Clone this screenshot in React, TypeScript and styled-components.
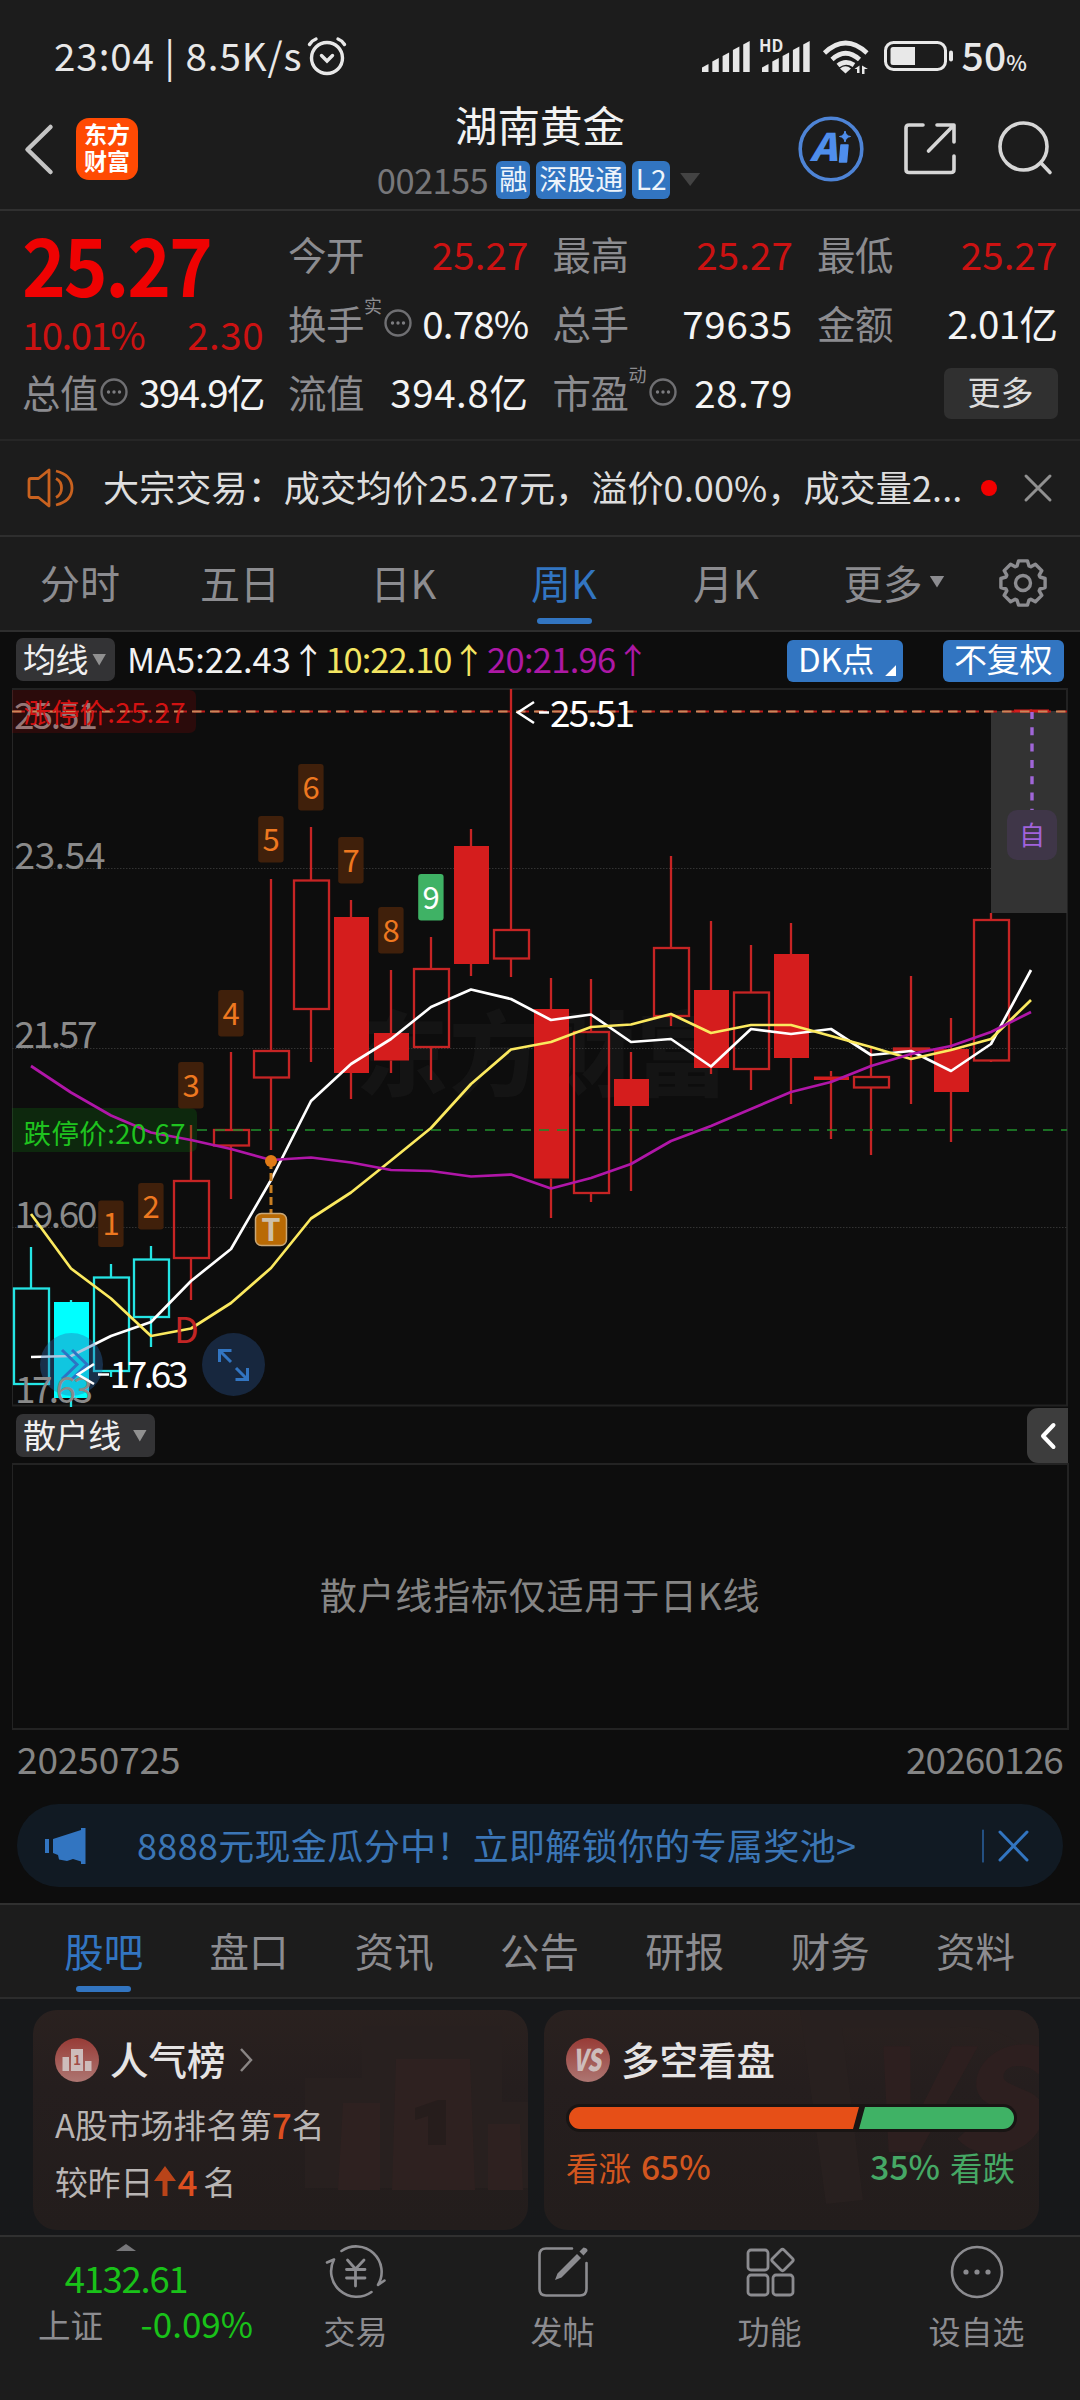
import React from "react";
import styled, { createGlobalStyle, css } from "styled-components";

const GlobalStyle = createGlobalStyle`
  * { box-sizing: border-box; }
  html, body { margin: 0; padding: 0; background: #1c1c1c; }
  body { font-family: "Noto Sans CJK SC", "Noto Sans", sans-serif; color: #e8e8e8; }
  svg { display: block; }
`;

const BLUE = "#3275c1";
const RED = "#cb1212";
const GREY = "#8c8c90";

const Page = styled.div`
  width: 1080px;
  height: 2400px;
  display: flex;
  flex-direction: column;
  background: #1c1c1c;
  overflow: hidden;
  white-space: nowrap;
`;

const Txt = styled.span<{ $s: number; $c?: string; $ls?: number; $w?: number; $mt?: number }>`
  font-size: ${(p) => p.$s}px;
  line-height: 1.2;
  color: ${(p) => p.$c ?? "inherit"};
  letter-spacing: ${(p) => p.$ls ?? 0}px;
  font-weight: ${(p) => p.$w ?? 400};
  margin-top: ${(p) => p.$mt ?? 0}px;
`;

/* ---------- status bar ---------- */
const StatusBar = styled.div`
  height: 96px;
  padding: 16px 53px 0 54px;
  display: flex;
  justify-content: space-between;
  align-items: center;
  color: #e8e8e8;
`;
const StatusGroup = styled.div`
  display: flex;
  align-items: center;
  height: 60px;
  padding-bottom: 3px;
`;
const StatusIcons = styled.svg`
  width: 255px;
  height: 50px;
  margin-right: 5px;
  margin-top: 5px;
`;
const Clock = styled.svg`
  width: 42px;
  height: 42px;
  margin: 4px 0 0 3px;
`;

/* ---------- header ---------- */
const Header = styled.header`
  height: 115px;
  display: grid;
  grid-template-columns: 1fr auto 1fr;
  align-items: center;
  padding-bottom: 8px;
  border-bottom: 2px solid #303030;
`;
const HeaderLeft = styled.div`
  display: flex;
  align-items: center;
  padding-left: 22px;
  gap: 18px;
`;
const Logo = styled.div`
  width: 62px;
  height: 62px;
  border-radius: 13px;
  background: #ff4a03;
  color: #fff;
  display: flex;
  flex-direction: column;
  align-items: center;
  justify-content: center;
  padding-bottom: 3px;
  font-size: 23px;
  line-height: 27px;
  font-weight: 700;
`;
const TitleBlock = styled.div`
  display: flex;
  flex-direction: column;
  align-items: center;
  gap: 12px;
`;
const Title = styled.div`
  height: 50px;
  line-height: 50px;
  font-size: 42.5px;
  color: #f2f2f2;
`;
const SubTitle = styled.div`
  display: flex;
  align-items: center;
  height: 38px;
  padding-right: 3px;
`;
const Tag = styled.span<{ $w: number; $ml: number }>`
  width: ${(p) => p.$w}px;
  margin-left: ${(p) => p.$ml}px;
  height: 38px;
  border-radius: 6px;
  background: ${BLUE};
  color: #eef4fb;
  font-size: 28px;
  line-height: 34px;
  text-align: center;
`;
const HeaderRight = styled.div`
  display: flex;
  justify-content: flex-end;
  align-items: center;
  padding-right: 22px;
`;
const Down = styled.i<{ $w: number; $h: number; $c: string; $ml?: number }>`
  width: ${(p) => p.$w}px;
  height: ${(p) => p.$h}px;
  margin-left: ${(p) => p.$ml ?? 0}px;
  background: ${(p) => p.$c};
  clip-path: polygon(0 0, 100% 0, 50% 100%);
  flex: none;
`;

/* ---------- quote ---------- */
const Quote = styled.section`
  height: 230px;
  padding: 8px 22px 0 22px;
  display: grid;
  grid-template-columns: 242px repeat(3, 240.5px);
  column-gap: 24px;
  grid-auto-rows: 69px;
  border-bottom: 2px solid #262626;
`;
const PriceCell = styled.div`
  grid-row: span 2;
  display: flex;
  flex-direction: column;
  padding-top: 1px;
`;
const Price = styled.div`
  font-size: 80px;
  line-height: 84px;
  font-weight: 700;
  letter-spacing: -2.4px;
  color: #ef0202;
  transform: scaleX(0.93);
  transform-origin: left center;
`;
const ChangeRow = styled.div`
  display: flex;
  justify-content: space-between;
  padding-top: 6px;
`;
const Cell = styled.div`
  display: flex;
  align-items: center;
  justify-content: space-between;
`;
const LabelGroup = styled.div`
  display: flex;
  align-items: center;
`;
const Sup = styled.span`
  font-size: 18px;
  line-height: 20px;
  color: ${GREY};
  align-self: flex-start;
  margin: -4px 0 0 0;
`;
const MoreDots = styled.svg<{ $ml?: number }>`
  width: 28px;
  height: 28px;
  margin-left: ${(p) => p.$ml ?? 0}px;
  margin-top: 1px;
`;
const MoreButton = styled.div`
  align-self: center;
  margin-left: auto;
  width: 114px;
  height: 51px;
  margin-top: 4px;
  border-radius: 7px;
  background: #303030;
  color: #dcdcdc;
  font-size: 33px;
  line-height: 47px;
  text-align: center;
`;

/* ---------- news ---------- */
const News = styled.div`
  height: 96px;
  border-bottom: 2px solid #2e2e2e;
  display: flex;
  align-items: center;
  padding: 0 27px 1px 27px;
`;
const NewsText = styled.div`
  flex: 1;
  margin-left: 29px;
  font-size: 36.1px;
  line-height: 48px;
  padding-bottom: 4px;
  letter-spacing: 0.08px;
  color: #dedede;
`;
const Dot = styled.i`
  width: 16px;
  height: 16px;
  border-radius: 8px;
  background: #f20000;
  margin-right: 26px;
`;

/* ---------- period tabs ---------- */
const Tabs = styled.nav`
  height: 95px;
  display: flex;
  border-bottom: 2px solid #2e2e2e;
`;
const Tab = styled.div<{ $w: number; $on?: boolean; $size?: number; $pl?: number }>`
  width: ${(p) => p.$w}px;
  height: 93px;
  display: flex;
  justify-content: center;
  align-items: center;
  position: relative;
  padding: 0 0 4px ${(p) => p.$pl ?? 0}px;
  font-size: ${(p) => p.$size ?? 40}px;
  line-height: 50px;
  color: ${(p) => (p.$on ? BLUE : GREY)};
  ${(p) =>
    p.$on &&
    css`
      &::after {
        content: "";
        position: absolute;
        bottom: 6px;
        left: 50%;
        margin-left: -27.5px;
        width: 55px;
        height: 6px;
        border-radius: 3px;
        background: ${BLUE};
      }
    `}
`;

/* ---------- chart ---------- */
const ChartArea = styled.section`
  background: #0d0d0d;
  height: 1271px;
  display: flex;
  flex-direction: column;
`;
const ChartSvg = styled.svg`
  overflow: visible;
`;
const MaBar = styled.div`
  height: 56px;
  padding: 6px 16px 0;
  display: flex;
  align-items: flex-start;
`;
const Chip = styled.div<{ $w: number; $gap: number }>`
  width: ${(p) => p.$w}px;
  height: 43px;
  border-radius: 7px;
  background: #333335;
  color: #f0f0f0;
  display: flex;
  align-items: center;
  padding-left: 7px;
  gap: ${(p) => p.$gap}px;
`;
const ChipText = styled.span`
  font-size: 33px;
  line-height: 38px;
  padding-bottom: 4px;
  letter-spacing: -0.4px;
`;
const Ma = styled.span<{ $c: string; $ml?: number; $ls?: number }>`
  color: ${(p) => p.$c};
  margin-left: ${(p) => p.$ml ?? 0}px;
  font-size: 34.5px;
  line-height: 41px;
  letter-spacing: ${(p) => p.$ls ?? 0}px;
`;
const BlueButton = styled.div<{ $w: number; $ml: string }>`
  width: ${(p) => p.$w}px;
  margin-left: ${(p) => p.$ml};
  height: 42px;
  margin-top: 2px;
  border-radius: 6px;
  background: ${BLUE};
  color: #fff;
  font-size: 33px;
  line-height: 37px;
  padding-left: 11px;
  display: flex;
  letter-spacing: -0.3px;
`;
const Corner = styled.i`
  width: 11px;
  height: 11px;
  margin: 25px 0 0 11px;
  background: #fff;
  clip-path: polygon(100% 0, 100% 100%, 0 100%);
`;
const SubBar = styled.div`
  height: 55px;
  padding: 0 12px 0 16px;
  display: flex;
  justify-content: space-between;
  align-items: center;
`;
const Collapse = styled.div`
  width: 41px;
  height: 55px;
  border-radius: 11px 0 0 11px;
  background: #3d3d3d;
  display: flex;
  align-items: center;
  justify-content: center;
`;
const SubPane = styled.div`
  height: 267px;
  margin: 0 11px 0 12px;
  border: 2px solid #232323;
  border-left-width: 1px;
  display: flex;
  align-items: center;
  justify-content: center;
  padding-bottom: 5px;
  font-size: 37px;
  letter-spacing: 0.8px;
  color: #858585;
`;
const Dates = styled.div`
  height: 74px;
  display: flex;
  justify-content: space-between;
  padding: 5px 17px 0 17px;
`;
const DateText = styled.span<{ $ls: number }>`
  font-size: 37px;
  line-height: 46px;
  letter-spacing: ${(p) => p.$ls}px;
  color: #858585;
`;
const Promo = styled.div`
  height: 83px;
  margin: 0 17px;
  border-radius: 42px;
  background: #111a23;
  display: flex;
  align-items: center;
  padding: 0 33px 0 27px;
  color: #3b76b6;
`;
const PromoText = styled.div`
  margin-left: 50px;
  flex: 1;
  font-size: 36px;
  line-height: 48px;
  letter-spacing: 0.34px;
  padding-bottom: 3px;
`;

/* ---------- info ---------- */
const InfoTabs = styled.nav`
  height: 96px;
  padding: 0 31px 0 31px;
  border-top: 2px solid #303030;
  border-bottom: 2px solid #2c2c2c;
  display: flex;
`;
const Cards = styled.section`
  height: 236px;
  background: #17181a;
  padding: 11px 41px 0 33px;
  display: flex;
  gap: 16px;
`;
const Card = styled.div`
  width: 495px;
  height: 220px;
  border-radius: 24px;
  background: linear-gradient(180deg, #2a211f 0%, #251e1e 35%, #231d1c 100%);
  position: relative;
  overflow: hidden;
  padding: 24px 24px 0 22px;
`;
const Watermark = styled.svg`
  position: absolute;
  left: 0;
  top: 0;
`;
const CardHead = styled.div`
  position: relative;
  display: flex;
  align-items: center;
  height: 52px;
`;
const CardTitle = styled.span`
  font-size: 38.5px;
  line-height: 46px;
  font-weight: 500;
  padding-bottom: 4px;
  margin: 0 13px 0 11px;
  color: #e6e4e4;
`;
const CardLine = styled.div<{ $mt: number }>`
  position: relative;
  margin-top: ${(p) => p.$mt}px;
  height: 44px;
  line-height: 44px;
  font-size: 32.8px;
  display: flex;
  align-items: center;
  color: #b9b5b4;
`;
const Hot = styled.b<{ $mr?: number }>`
  font-weight: 500;
  font-size: 35px;
  margin-right: ${(p) => p.$mr ?? 0}px;
  color: #dc4f20;
`;
const Bar = styled.div`
  position: relative;
  margin: 18px 0 0 0;
  width: 451px;
  height: 28px;
  padding: 3px;
  border-radius: 14px;
  background: #191514;
`;
const BarFill = styled.div`
  height: 22px;
  display: flex;
  border-radius: 11px;
  overflow: hidden;
`;
const Seg = styled.i<{ $c: string; $left?: boolean }>`
  background: ${(p) => p.$c};
  ${(p) =>
    p.$left
      ? css`width: 290px; clip-path: polygon(0 0, 100% 0, 284px 100%, 0 100%);`
      : css`flex: 1; clip-path: polygon(6px 0, 100% 0, 100% 100%, 0 100%);`}
`;
const Votes = styled.div`
  position: relative;
  display: flex;
  justify-content: space-between;
  margin-top: 12px;
`;
const Vote = styled.div<{ $c: string }>`
  display: flex;
  align-items: center;
  gap: 10px;
  height: 44px;
  color: ${(p) => p.$c};
`;

/* ---------- bottom nav ---------- */
const BottomNav = styled.nav`
  height: 165px;
  border-top: 2px solid #303030;
  display: grid;
  grid-template-columns: 252px repeat(4, 207px);
  color: ${GREY};
`;
const IndexCell = styled.div`
  display: flex;
  flex-direction: column;
  align-items: center;
  padding-top: 7px;
  color: #19c219;
`;
const UpMark = styled.i`
  width: 20px;
  height: 7px;
  background: #77777a;
  clip-path: polygon(50% 0, 100% 100%, 0 100%);
`;
const IndexRow = styled.div`
  display: flex;
  width: 215px;
  justify-content: space-between;
  margin-left: 38px;
  align-self: flex-start;
`;
const NavItem = styled.div`
  display: flex;
  flex-direction: column;
  align-items: center;
  padding-top: 6px;
  font-size: 32px;
  line-height: 40px;
  gap: 9px;
`;

function Dots({ ml = 0 }: { ml?: number }) {
  return (
    <MoreDots $ml={ml} viewBox="0 0 28 28" fill="none" stroke="#6f6f72">
      <circle cx="14" cy="14" r="12.5" strokeWidth="2.4" />
      <g fill="#7d7d80" stroke="none">
        <circle cx="8.5" cy="14" r="1.7" />
        <circle cx="14" cy="14" r="1.7" />
        <circle cx="19.5" cy="14" r="1.7" />
      </g>
    </MoreDots>
  );
}

type Kind = "c" | "cf" | "r" | "rf";
const candles: [Kind, number, number, number, number][] = [
  ["c", 1247, 1288.5, 1384, 1384],
  ["cf", 1300, 1302, 1398, 1407],
  ["c", 1264, 1277.5, 1371, 1377],
  ["c", 1246, 1259.5, 1317, 1347],
  ["r", 1125, 1181, 1258, 1300],
  ["r", 1052, 1130, 1145.5, 1199],
  ["r", 879, 1051, 1077.5, 1150],
  ["r", 827, 880.5, 1009, 1062],
  ["rf", 900, 917, 1073, 1099],
  ["rf", 970, 1033, 1060.5, 1073],
  ["r", 937, 969, 1047, 1080],
  ["rf", 829, 846, 964, 976],
  ["r", 689, 930, 958.5, 977],
  ["rf", 978, 1009, 1178.5, 1218],
  ["r", 979, 1032, 1193, 1202],
  ["rf", 1052, 1079, 1106, 1191],
  ["r", 856, 948, 1016, 1026],
  ["rf", 921, 990, 1068, 1074],
  ["r", 945, 992.5, 1069, 1090],
  ["rf", 923, 954, 1058, 1104],
  ["rf", 1071, 1076.5, 1080, 1139],
  ["r", 1048, 1077, 1087.5, 1155],
  ["r", 976, 1048.5, 1050, 1104],
  ["rf", 1018, 1049, 1092, 1142],
  ["r", 913, 920, 1060.5, 1062],
  ["rf", 710, 709.5, 712.5, 712],
];
const ma5 = [1357, 1356, 1336, 1322, 1281, 1249, 1180, 1101, 1064, 1039, 1007, 989.5, 999, 1020, 1014.5, 1042, 1039, 1066.5, 1029, 1034, 1029, 1055, 1051, 1071, 1044, 970];
const ma10 = [1214, 1268.5, 1298.5, 1336, 1328.5, 1303, 1268, 1218.5, 1192.5, 1160.5, 1128, 1084, 1049.5, 1042, 1027, 1024.5, 1014, 1033, 1025, 1025, 1036, 1047, 1059, 1050, 1039, 1000];
const ma20 = [1066, 1092.5, 1115.5, 1132.5, 1140, 1149, 1160, 1157.5, 1162.5, 1170, 1171, 1176.5, 1174.5, 1188.5, 1178, 1164, 1141, 1126, 1109, 1092, 1082, 1066, 1054, 1046, 1032, 1012];
const cx = (i: number) => 31 + 40 * i;
const line = (v: number[]) => v.map((y, i) => `${cx(i)},${y}`).join(" ");
const marks: [number, number][] = [[2, 1200.5], [3, 1183], [4, 1062], [5, 990], [6, 816], [7, 764], [8, 837], [9, 907], [10, 874]];

function KLine() {
  return (
    <ChartSvg width="1080" height="720" viewBox="0 688 1080 720" fontFamily="'Noto Sans CJK SC', sans-serif">
      <text x="356" y="1089" fontSize="92" fontWeight="900" fill="#141414" textLength="372">东方财富</text>
      <path d="M12.5 689V1406" stroke="#262626" strokeWidth="1" />
      <path d="M12 689H1067V1405.5H12" stroke="#222" strokeWidth="2" fill="none" />
      <g stroke="#333" strokeWidth="1" strokeDasharray="1.5 1.5">
        <path d="M12 868.5H1067M12 1048.5H1067M12 1227.5H1067" />
      </g>
      <g fill="#8a8a8a" fontSize="37">
        <text x="14" y="729" textLength="84">25.51</text>
        <text x="14.500" y="869" textLength="91">23.54</text>
        <text x="14.500" y="1048" textLength="83">21.57</text>
        <text x="14.500" y="1228" textLength="83">19.60</text>
      </g>
      <rect x="991" y="711" width="76" height="202" fill="#333" />
      <g strokeWidth="2.3">
        {candles.map(([k, hi, top, bot, lo], i) => {
          const cyan = k[0] === "c";
          const filled = k[1] === "f";
          const c = cyan ? "#24e4e4" : "#c62424";
          const x = cx(i);
          return (
            <g key={i} stroke={c}>
              <path d={`M${x} ${hi}V${top}M${x} ${bot}V${lo}`} />
              {filled ? (
                <rect x={x - 17} y={top} width="35" height={bot - top} stroke="none" fill={cyan ? "#00ffff" : "#d51d1d"} />
              ) : (
                <rect x={x - 17} y={top} width="35" height={bot - top} fill="none" />
              )}
            </g>
          );
        })}
      </g>
      <path d="M12 690H189Q196 690 196 697V726Q196 733 189 733H12Z" fill="#e00000" fillOpacity=".14" />
      <path d="M12 1108H190Q197 1108 197 1115V1145Q197 1152 190 1152H12Z" fill="#0c8a0c" fillOpacity=".22" />
      <path d="M13.5 711.5H1067" stroke="#c01818" strokeWidth="1.8" strokeDasharray="11.5 6.5" />
      <path d="M12 711.5H1067" stroke="#c9875a" strokeWidth="1.8" strokeDasharray="9.5 8.5" />
      <path d="M197 1130H1067" stroke="#1f8a2a" strokeOpacity=".8" strokeWidth="2" strokeDasharray="10 8" />
      <text x="23.5" y="723" fontSize="27.5" fill="#d31212" textLength="162">涨停价:25.27</text>
      <g fill="none" strokeWidth="2.7" strokeLinejoin="round">
        <polyline points={line(ma5)} stroke="#fff" />
        <polyline points={line(ma10)} stroke="#fbe95f" />
        <polyline points={line(ma20)} stroke="#b016a8" />
      </g>
      <text x="23.5" y="1144" fontSize="27.5" fill="#1fc31f" textLength="162">跌停价:20.67</text>
      <g fontSize="31" textAnchor="middle">
        {marks.map(([i, y], n) => (
          <g key={n}>
            <rect x={cx(i) - 12.8} y={y} width="25.4" height="46.5" rx="3" fill={n === 8 ? "#3fb265" : "#40200b"} />
            <text x={cx(i)} y={y + 34.5} fill={n === 8 ? "#fff" : "#ee7820"}>{n + 1}</text>
          </g>
        ))}
      </g>
      <path d="M534 702L518 712.5L534 723M539 712.5H549" fill="none" stroke="#fff" strokeWidth="2.6" />
      <text x="550" y="726.5" fontSize="37" fill="#fff" textLength="85">25.51</text>
      <path d="M1032 712V810" stroke="#a066d8" strokeWidth="3.4" strokeDasharray="8 8.3" strokeDashoffset="1" />
      <rect x="1007" y="810" width="50" height="50" rx="10" fill="#3f3648" />
      <text x="1032" y="845" fontSize="26" textAnchor="middle" fill="#a163dc">自</text>
      <path d="M271 1161V1214" stroke="#c87e22" strokeWidth="3" strokeDasharray="8 4" />
      <circle cx="271" cy="1161" r="6" fill="#e07a16" />
      <rect x="255.5" y="1213.5" width="31" height="32" rx="6" fill="#b96a04" stroke="#c9a878" strokeWidth="1.5" />
      <text x="271" y="1241" fontSize="31" fontWeight="700" textAnchor="middle" fill="#cdbfa8">T</text>
      <text x="174" y="1343" fontSize="36" fill="#c22525">D</text>
      <circle cx="71.5" cy="1364.5" r="31.5" fill="#2b6aae" fillOpacity=".38" />
      <path d="M62 1350L77 1364.5L62 1379M72 1350L87 1364.5L72 1379" fill="none" stroke="#2d74c4" strokeWidth="3" />
      <text x="15" y="1402.5" fontSize="37" fill="#8a8a8a" textLength="78">17.63</text>
      <path d="M94 1364L78 1374.5L94 1384M98 1374.5H109" fill="none" stroke="#fff" strokeWidth="2.6" />
      <text x="109.500" y="1388" fontSize="37" fill="#fff" textLength="79">17.63</text>
      <circle cx="233.5" cy="1364.5" r="31.5" fill="#17273e" />
      <path d="M219.5 1362V1350.5H231.5M220 1351L231 1362M247.5 1368V1379.5H235.5M247 1379L236 1368" fill="none" stroke="#3275c1" strokeWidth="3" />
    </ChartSvg>
  );
}

const bars = [8, 14, 19.5, 25.5, 31];

function TopBars() {
  return (
    <>
      <StatusBar>
        <StatusGroup>
          <Txt $s={38.5} $ls={0.95}>23:04 | 8.5K/s</Txt>
          <Clock viewBox="0 0 42 42" fill="none" stroke="#e8e8e8" strokeWidth="3.4" strokeLinecap="round">
            <circle cx="21" cy="22" r="15.5" />
            <path d="M15.5 19.5L21 25L26.5 19.5M3.5 8.5Q6 4.5 10 3M38.5 8.5Q36 4.5 32 3" />
          </Clock>
        </StatusGroup>
        <StatusGroup>
          <StatusIcons viewBox="700 33 255 50" fill="#e8e8e8">
            {[701, 761].map((x0) =>
              bars.map((h, i) => (
                <path key={x0 + i} d={`M${x0 + i * 10.3} 73V${73 - h + 3.5}L${x0 + i * 10.3 + 6.5} ${73 - h}V73Z`} />
              ))
            )}
            <text x="758" y="53" fontSize="16.5" fontWeight="700" fontFamily="'Noto Sans CJK SC'">HD</text>
            <g fill="none" stroke="#e8e8e8" strokeWidth="4.6">
              <path d="M823.5 54Q844.5 34 866 54M831 60.5Q844.5 48 858.5 60.5" />
              <path d="M837 66.5Q844.5 60.5 853 66" />
            </g>
            <path d="M839 69.5Q844.5 65 850 69.5L844.5 74.5Z" />
            <path d="M853.5 70L858.5 66.5V74H856V70ZM861 66.5L867 70H863.5V75H861Z" />
            <rect x="884.5" y="43.5" width="60" height="27" rx="8" fill="none" stroke="#e8e8e8" strokeWidth="3" />
            <path d="M892 48H914V66H892Q889.5 66 889.5 63.5V50.5Q889.5 48 892 48Z" />
            <rect x="948" y="51.5" width="4" height="11" rx="2" />
          </StatusIcons>
          <Txt $s={39} $ls={0.2} $w={500}>50</Txt>
          <Txt $s={22} $w={500} $mt={14}>%</Txt>
        </StatusGroup>
      </StatusBar>
      <Header>
        <HeaderLeft>
          <svg width="36" height="54" viewBox="0 0 36 54" fill="none" stroke="#c4c4c4" strokeWidth="4.5" strokeLinecap="round" strokeLinejoin="round">
            <path d="M28.5 5L5.5 27.5L28.5 50" />
          </svg>
          <Logo>
            <span>东方</span>
            <span>财富</span>
          </Logo>
        </HeaderLeft>
        <TitleBlock>
          <Title>湖南黄金</Title>
          <SubTitle>
            <Txt $s={34.5} $c="#77777a" $ls={-0.6}>002155</Txt>
            <Tag $w={34} $ml={8}>融</Tag>
            <Tag $w={90} $ml={6}>深股通</Tag>
            <Tag $w={38} $ml={6}>L2</Tag>
            <Down $w={20} $h={13} $c="#434343" $ml={10} />
          </SubTitle>
        </TitleBlock>
        <HeaderRight>
          <svg width="262" height="70" viewBox="796 114 262 70" fill="none">
            <circle cx="831" cy="149" r="30.8" stroke="#4e84d6" strokeWidth="3.6" />
            <text x="810" y="161" fontSize="38" fontWeight="900" fontStyle="italic" fill="#4f8eec" textLength="27" lengthAdjust="spacingAndGlyphs" fontFamily="'Noto Sans CJK SC'">A</text>
            <path d="M841 145H848L846.5 162H839.5Z" fill="#4f8eec" stroke="#4f8eec" strokeWidth="1.5" strokeLinejoin="round" />
            <path d="M845 131Q846 136 850.5 136.5Q846 137 845 142Q844 137 839.5 136.5Q844 136 845 131Z" fill="#4f8eec" stroke="#4f8eec" />
            <g stroke="#d6d6d6" strokeWidth="3.6" strokeLinecap="round" strokeLinejoin="round">
              <path d="M923 125H909Q906 125 906 128V169.5Q906 172.5 909 172.5H951Q954 172.5 954 169.5V156M937 125H954V142M953 126L928.5 151" />
              <circle cx="1023.5" cy="146.5" r="23.5" />
              <path d="M1041 163L1050 172.5" />
            </g>
          </svg>
        </HeaderRight>
      </Header>
    </>
  );
}

interface StatProps {
  label: string;
  value: string;
  red?: boolean;
  children?: React.ReactNode;
  ls?: number;
}
const Stat = ({ label, value, red, children, ls = 0.1 }: StatProps) => (
  <Cell>
    <LabelGroup>
      <Txt $s={38.5} $c={GREY} $ls={-0.5}>{label}</Txt>
      {children}
    </LabelGroup>
    <Txt $s={38.5} $c={red ? RED : "#f4f4f4"} $ls={ls}>{value}</Txt>
  </Cell>
);

const gear = Array.from({ length: 8 }, (_, i) => {
  const a = (i * Math.PI) / 4 - Math.PI / 2;
  const p = (r: number, d: number) => `${(26 + r * Math.cos(a + d)).toFixed(1)} ${(26 + r * Math.sin(a + d)).toFixed(1)}`;
  return `${p(18, -0.34)} L${p(22.5, -0.2)} L${p(22.5, 0.2)} L${p(18, 0.34)}`;
}).join(" L");

export default function App() {
  return (
    <Page>
      <GlobalStyle />
      <TopBars />
      <Quote>
        <PriceCell>
          <Price>25.27</Price>
          <ChangeRow>
            <Txt $s={38.5} $c={RED} $ls={-1.6}>10.01%</Txt>
            <Txt $s={38.5} $c={RED} $ls={0.5}>2.30</Txt>
          </ChangeRow>
        </PriceCell>
        <Stat label="今开" value="25.27" red />
        <Stat label="最高" value="25.27" red />
        <Stat label="最低" value="25.27" red />
        <Stat label="换手" value="0.78%" ls={-0.8}>
          <Sup>实</Sup>
          <Dots ml={2} />
        </Stat>
        <Stat label="总手" value="79635" ls={0.8} />
        <Stat label="金额" value="2.01亿" ls={-0.6} />
        <Stat label="总值" value="394.9亿" ls={-1.6}>
          <Dots ml={2} />
        </Stat>
        <Stat label="流值" value="394.8亿" ls={0.6} />
        <Stat label="市盈" value="28.79" ls={0.5}>
          <Sup>动</Sup>
          <Dots ml={2} />
        </Stat>
        <MoreButton>更多</MoreButton>
      </Quote>
      <News>
        <svg width="47" height="40" viewBox="0 0 47 40" fill="none" stroke="#c9621f" strokeWidth="2.8" strokeLinejoin="round">
          <path d="M22 2V38L11.5 29.5H4Q2 29.5 2 27.5V12.5Q2 10.5 4 10.5H11.5Z" />
          <path d="M29 10.5Q34.5 13.5 34.5 20Q34.5 26.5 29 29.5M29 3Q45 7 45 20Q45 33 29 37" />
        </svg>
        <NewsText>大宗交易：成交均价25.27元，溢价0.00%，成交量2...</NewsText>
        <Dot />
        <svg width="30" height="30" viewBox="0 0 30 30" stroke="#909090" strokeWidth="3" strokeLinecap="round">
          <path d="M3 3L27 27M27 3L3 27" />
        </svg>
      </News>
      <Tabs>
        <Tab $w={160}>分时</Tab>
        <Tab $w={160}>五日</Tab>
        <Tab $w={167}>日K</Tab>
        <Tab $w={154} $on>周K</Tab>
        <Tab $w={170}>月K</Tab>
        <Tab $w={161} $size={39.5} $pl={5}>
          更多
          <Down $w={15} $h={12} $c={GREY} $ml={7} />
        </Tab>
        <Tab $w={102}>
          <svg width="52" height="54" viewBox="0 -2 52 54" fill="none" stroke={GREY} strokeWidth="3.4" strokeLinejoin="round">
            <path d={`M${gear}Z`} />
            <circle cx="26" cy="26" r="7.5" />
          </svg>
        </Tab>
      </Tabs>
      <ChartArea>
        <MaBar>
          <Chip $w={99} $gap={4}>
            <ChipText>均线</ChipText>
            <Down $w={14} $h={12} $c="#909090" />
          </Chip>
          <Ma $c="#f2f2f2" $ml={12}>MA5:22.43↑</Ma>
          <Ma $c="#f3e561" $ls={-1}>10:22.10↑</Ma>
          <Ma $c="#ad18a5" $ls={-0.7} $ml={2}>20:21.96↑</Ma>
          <BlueButton $w={116} $ml="auto">
            DK点
            <Corner />
          </BlueButton>
          <BlueButton $w={121} $ml="40px">不复权</BlueButton>
        </MaBar>
        <KLine />
        <SubBar>
          <Chip $w={139} $gap={12}>
            <ChipText>散户线</ChipText>
            <Down $w={14} $h={12} $c="#909090" />
          </Chip>
          <Collapse>
            <svg width="20" height="30" viewBox="0 0 20 30" fill="none" stroke="#fff" strokeWidth="4" strokeLinecap="round" strokeLinejoin="round">
              <path d="M15.5 4L5 15L15.5 26" />
            </svg>
          </Collapse>
        </SubBar>
        <SubPane>散户线指标仅适用于日K线</SubPane>
        <Dates>
          <DateText $ls={-0.1}>20250725</DateText>
          <DateText $ls={-0.9}>20260126</DateText>
        </Dates>
        <Promo>
          <svg width="43" height="38" viewBox="0 0 43 38" fill="#3275c1">
            <path d="M1 12H5V26H1ZM9 12L37 3V1H41.5V37H37V34.5L29 32L23 34L15 32.5L14 28L9 26Z" />
          </svg>
          <PromoText>8888元现金瓜分中！立即解锁你的专属奖池&gt;</PromoText>
          <svg width="48" height="36" viewBox="0 0 48 36" fill="none" stroke="#3275c1" strokeWidth="3" strokeLinecap="round">
            <path d="M1 2V34" strokeWidth="1.2" />
            <path d="M18 4L45 32M45 4L18 32" />
          </svg>
        </Promo>
      </ChartArea>
      <InfoTabs>
        {["股吧", "盘口", "资讯", "公告", "研报", "财务", "资料"].map((t, i) => (
          <Tab key={t} $w={145.3} $on={i === 0} $size={39.5}>{t}</Tab>
        ))}
      </InfoTabs>
      <Cards>
        <Card>
          <Watermark width="495" height="220" viewBox="33 2010 495 220">
            <path d="M305 2188V2078H362V2026H502V2102H528V2188Z" fill="#28201f" />
            <path d="M396 2059H470L475 2190H392ZM343 2103H380V2190H338ZM488 2124H520L523 2190H488Z" fill="#2e2120" />
            <path d="M415 2108L438 2100H446V2145H428V2116L415 2120Z" fill="#261d1c" />
          </Watermark>
          <CardHead>
            <svg width="44" height="44" viewBox="0 0 44 44">
              <defs>
                <linearGradient id="badge" x1="0" y1="0" x2="0" y2="1">
                  <stop offset="0" stopColor="#973b36" />
                  <stop offset="1" stopColor="#ad7672" />
                </linearGradient>
              </defs>
              <circle cx="22" cy="22" r="22" fill="url(#badge)" />
              <path d="M7.5 19H14V33H7.5ZM16 11H28V33H16ZM30 23H36.5V33H30Z" fill="#cdbcbb" />
              <text x="22" y="27" textAnchor="middle" fontSize="13" fontWeight="700" fill="#a04c48">1</text>
            </svg>
            <CardTitle>人气榜</CardTitle>
            <svg width="14" height="26" viewBox="0 0 14 26" fill="none" stroke="#8a8584" strokeWidth="2.5">
              <path d="M2 2L12 13L2 24" />
            </svg>
          </CardHead>
          <CardLine $mt={16}>A股市场排名第<Hot>7</Hot>名</CardLine>
          <CardLine $mt={13}>
            较昨日
            <svg width="24" height="32" viewBox="0 0 24 32" fill="#b94419">
              <path d="M12 1L23 16H14.5V31H9.5V16H1Z" />
            </svg>
            <Hot $mr={6}>4</Hot>名
          </CardLine>
        </Card>
        <Card>
          <Watermark width="495" height="220" viewBox="544 2010 495 220" fontFamily="'Noto Sans CJK SC'">
            <path d="M800 2010H1039V2060Q1000 2020 950 2028H842L863 2200L826 2204Z" fill="#28201f" />
            <text x="858" y="2152" fontSize="142" fontWeight="900" fontStyle="italic" fill="#2d1f1f" textLength="182" lengthAdjust="spacingAndGlyphs">VS</text>
          </Watermark>
          <CardHead>
            <svg width="44" height="44" viewBox="0 0 44 44">
              <circle cx="22" cy="22" r="22" fill="url(#badge)" />
              <text x="21" y="33" textAnchor="middle" fontSize="30" fontWeight="900" fontStyle="italic" fill="#cdbcbb" textLength="28" lengthAdjust="spacingAndGlyphs" fontFamily="'Noto Sans CJK SC'">VS</text>
            </svg>
            <CardTitle>多空看盘</CardTitle>
          </CardHead>
          <Bar>
            <BarFill>
              <Seg $c="#e64f17" $left />
              <Seg $c="#3fb265" />
            </BarFill>
          </Bar>
          <Votes>
            <Vote $c="#d2561f">
              <Txt $s={32.5}>看涨</Txt>
              <Txt $s={33.5} $w={500}>65%</Txt>
            </Vote>
            <Vote $c="#46a865">
              <Txt $s={33.5} $w={500}>35%</Txt>
              <Txt $s={32.5}>看跌</Txt>
            </Vote>
          </Votes>
        </Card>
      </Cards>
      <BottomNav>
        <IndexCell>
          <UpMark />
          <Txt $s={36.5} $ls={-1.3} $mt={5}>4132.61</Txt>
          <IndexRow>
            <Txt $s={32.5} $c={GREY} $mt={4}>上证</Txt>
            <Txt $s={35} $ls={0} $mt={2}>-0.09%</Txt>
          </IndexRow>
        </IndexCell>
        <NavItem>
          <svg width="64" height="58" viewBox="324 2243 64 58" fill="none" stroke={GREY} strokeWidth="2.6" strokeLinecap="round" strokeLinejoin="round">
            <path d="M341.5 2251A25.5 25.5 0 0 1 378 2285L384.5 2280.5M371.5 2292A25.5 25.5 0 0 1 334 2259.5L327 2262.5" />
            <path d="M347.5 2260L355.5 2269L364 2260M346.5 2269.5H365M346.5 2278H365M355.5 2269V2286" strokeWidth="2.8" />
          </svg>
          <span>交易</span>
        </NavItem>
        <NavItem>
          <svg width="64" height="58" viewBox="530 2243 64 58" fill="none" stroke={GREY} strokeWidth="2.6" strokeLinecap="round">
            <path d="M571 2248.5H545Q538.5 2248.5 538.5 2255V2289Q538.5 2295.5 545 2295.5H579Q585.5 2295.5 585.5 2289V2263" />
            <path d="M554 2280L556.5 2273.5L576 2254L580 2258L560.5 2277.5ZM578.5 2251.5L582.5 2247.5Q587 2248 586.5 2251L582.5 2255.5Z" fill={GREY} stroke="none" />
          </svg>
          <span>发帖</span>
        </NavItem>
        <NavItem>
          <svg width="64" height="58" viewBox="737 2243 64 58" fill="none" stroke={GREY} strokeWidth="2.8" strokeLinejoin="round">
            <rect x="747" y="2250" width="20" height="20" rx="3" />
            <rect x="747" y="2275" width="20" height="20" rx="3" />
            <rect x="772" y="2275" width="20" height="20" rx="3" />
            <path d="M780 2250Q781.5 2248.5 783 2250L791.5 2258.5Q793 2260 791.5 2261.5L783 2270Q781.5 2271.5 780 2270L771.5 2261.5Q770 2260 771.5 2258.5Z" />
          </svg>
          <span>功能</span>
        </NavItem>
        <NavItem>
          <svg width="64" height="58" viewBox="0 0 64 58" fill="none" stroke={GREY} strokeWidth="2.6">
            <circle cx="32" cy="29" r="25" />
            <g fill={GREY} stroke="none">
              <circle cx="21" cy="29" r="2.6" />
              <circle cx="32" cy="29" r="2.6" />
              <circle cx="43" cy="29" r="2.6" />
            </g>
          </svg>
          <span>设自选</span>
        </NavItem>
      </BottomNav>
    </Page>
  );
}
